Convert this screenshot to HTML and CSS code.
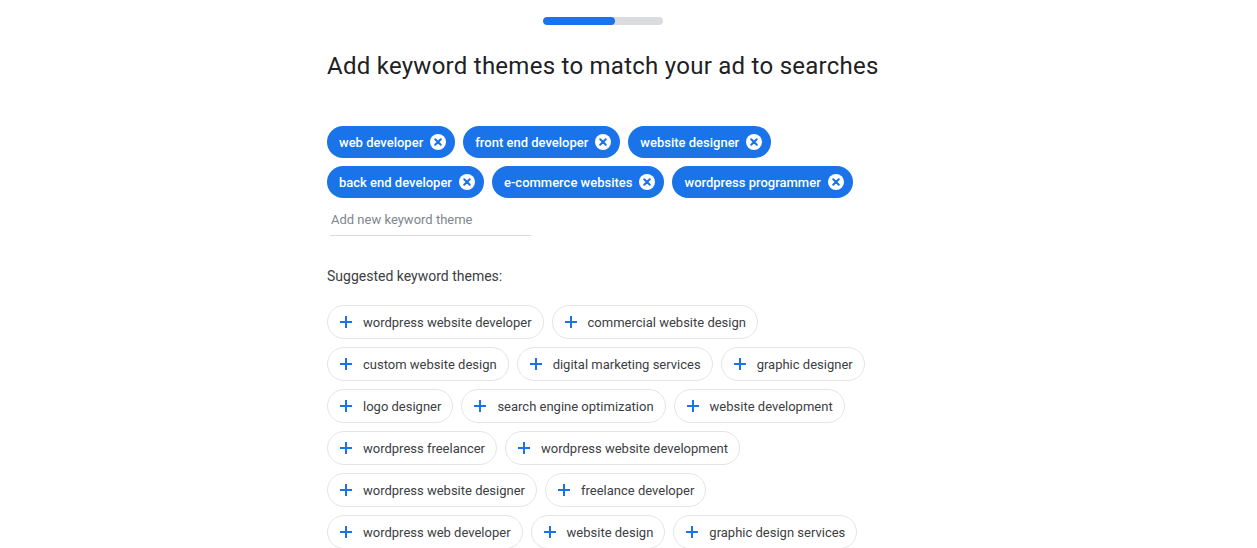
FILE: index.html
```html
<!DOCTYPE html>
<html lang="en">
<head>
  <meta charset="UTF-8">
  <meta name="viewport" content="width=device-width, initial-scale=1.0">
  <title>Keyword themes</title>
  <link rel="stylesheet" href="styles.css">
</head>
<body>
  <div class="page">
    <main class="panel">
      <div class="progress"><div class="progress-fill"></div></div>

      <h1>Add keyword themes to match your ad to searches</h1>

      <!-- Selected keyword themes -->
      <div class="chips selected">
        <div class="chip-row">
          <span class="chip chip-on">web developer<span class="chip-x"><svg viewBox="0 0 16 16"><circle cx="8" cy="8" r="8" fill="#fff"/><path d="M5.2 5.2l5.6 5.6M10.8 5.2l-5.6 5.6" stroke="#1a73e8" stroke-width="2" stroke-linecap="round"/></svg></span></span>
          <span class="chip chip-on">front end developer<span class="chip-x"><svg viewBox="0 0 16 16"><circle cx="8" cy="8" r="8" fill="#fff"/><path d="M5.2 5.2l5.6 5.6M10.8 5.2l-5.6 5.6" stroke="#1a73e8" stroke-width="2" stroke-linecap="round"/></svg></span></span>
          <span class="chip chip-on">website designer<span class="chip-x"><svg viewBox="0 0 16 16"><circle cx="8" cy="8" r="8" fill="#fff"/><path d="M5.2 5.2l5.6 5.6M10.8 5.2l-5.6 5.6" stroke="#1a73e8" stroke-width="2" stroke-linecap="round"/></svg></span></span>
        </div>
        <div class="chip-row">
          <span class="chip chip-on">back end developer<span class="chip-x"><svg viewBox="0 0 16 16"><circle cx="8" cy="8" r="8" fill="#fff"/><path d="M5.2 5.2l5.6 5.6M10.8 5.2l-5.6 5.6" stroke="#1a73e8" stroke-width="2" stroke-linecap="round"/></svg></span></span>
          <span class="chip chip-on">e-commerce websites<span class="chip-x"><svg viewBox="0 0 16 16"><circle cx="8" cy="8" r="8" fill="#fff"/><path d="M5.2 5.2l5.6 5.6M10.8 5.2l-5.6 5.6" stroke="#1a73e8" stroke-width="2" stroke-linecap="round"/></svg></span></span>
          <span class="chip chip-on">wordpress programmer<span class="chip-x"><svg viewBox="0 0 16 16"><circle cx="8" cy="8" r="8" fill="#fff"/><path d="M5.2 5.2l5.6 5.6M10.8 5.2l-5.6 5.6" stroke="#1a73e8" stroke-width="2" stroke-linecap="round"/></svg></span></span>
        </div>
      </div>

      <input class="new-theme" type="text" placeholder="Add new keyword theme">

      <p class="label">Suggested keyword themes:</p>

      <!-- Suggestions -->
      <div class="chips suggested">
        <div class="chip-row">
          <span class="chip chip-add"><svg class="plus" viewBox="0 0 12 12"><path d="M6 0v12M0 6h12" stroke="#1a73e8" stroke-width="2"/></svg>wordpress website developer</span>
          <span class="chip chip-add"><svg class="plus" viewBox="0 0 12 12"><path d="M6 0v12M0 6h12" stroke="#1a73e8" stroke-width="2"/></svg>commercial website design</span>
        </div>
        <div class="chip-row">
          <span class="chip chip-add"><svg class="plus" viewBox="0 0 12 12"><path d="M6 0v12M0 6h12" stroke="#1a73e8" stroke-width="2"/></svg>custom website design</span>
          <span class="chip chip-add"><svg class="plus" viewBox="0 0 12 12"><path d="M6 0v12M0 6h12" stroke="#1a73e8" stroke-width="2"/></svg>digital marketing services</span>
          <span class="chip chip-add"><svg class="plus" viewBox="0 0 12 12"><path d="M6 0v12M0 6h12" stroke="#1a73e8" stroke-width="2"/></svg>graphic designer</span>
        </div>
        <div class="chip-row">
          <span class="chip chip-add"><svg class="plus" viewBox="0 0 12 12"><path d="M6 0v12M0 6h12" stroke="#1a73e8" stroke-width="2"/></svg>logo designer</span>
          <span class="chip chip-add"><svg class="plus" viewBox="0 0 12 12"><path d="M6 0v12M0 6h12" stroke="#1a73e8" stroke-width="2"/></svg>search engine optimization</span>
          <span class="chip chip-add"><svg class="plus" viewBox="0 0 12 12"><path d="M6 0v12M0 6h12" stroke="#1a73e8" stroke-width="2"/></svg>website development</span>
        </div>
        <div class="chip-row">
          <span class="chip chip-add"><svg class="plus" viewBox="0 0 12 12"><path d="M6 0v12M0 6h12" stroke="#1a73e8" stroke-width="2"/></svg>wordpress freelancer</span>
          <span class="chip chip-add"><svg class="plus" viewBox="0 0 12 12"><path d="M6 0v12M0 6h12" stroke="#1a73e8" stroke-width="2"/></svg>wordpress website development</span>
        </div>
        <div class="chip-row">
          <span class="chip chip-add"><svg class="plus" viewBox="0 0 12 12"><path d="M6 0v12M0 6h12" stroke="#1a73e8" stroke-width="2"/></svg>wordpress website designer</span>
          <span class="chip chip-add"><svg class="plus" viewBox="0 0 12 12"><path d="M6 0v12M0 6h12" stroke="#1a73e8" stroke-width="2"/></svg>freelance developer</span>
        </div>
        <div class="chip-row">
          <span class="chip chip-add"><svg class="plus" viewBox="0 0 12 12"><path d="M6 0v12M0 6h12" stroke="#1a73e8" stroke-width="2"/></svg>wordpress web developer</span>
          <span class="chip chip-add"><svg class="plus" viewBox="0 0 12 12"><path d="M6 0v12M0 6h12" stroke="#1a73e8" stroke-width="2"/></svg>website design</span>
          <span class="chip chip-add"><svg class="plus" viewBox="0 0 12 12"><path d="M6 0v12M0 6h12" stroke="#1a73e8" stroke-width="2"/></svg>graphic design services</span>
        </div>
      </div>
    </main>
  </div>
</body>
</html>
```

FILE: styles.css
```css
body {
  margin: 0;
  background: #fff;
  font-family: Roboto, Arial, sans-serif;
  color: #3c4043;
  overflow: hidden;
}

.page {
  display: flex;
  justify-content: center;
  padding-right: 52px;
}

.panel {
  width: 551px;
  display: flex;
  flex-direction: column;
}

/* Progress bar */
.progress {
  align-self: center;
  width: 120px;
  height: 8px;
  margin-top: 17px;
  border-radius: 4px;
  background: #dadce0;
  overflow: hidden;
}

.progress-fill {
  width: 60%;
  height: 100%;
  border-radius: 4px;
  background: #1a73e8;
}

h1 {
  margin: 25px 0 0;
  font-size: 24px;
  font-weight: 400;
  line-height: 32px;
  letter-spacing: 0.26px;
  color: #202124;
  white-space: nowrap;
}

/* Chips */
.chips {
  display: flex;
  flex-direction: column;
  gap: 8px;
}

.chip-row {
  display: flex;
  gap: 8px;
}

.selected {
  margin-top: 44px;
}

.chip {
  display: inline-flex;
  align-items: center;
  box-sizing: border-box;
  border-radius: 17px;
  font-size: 13px;
  white-space: nowrap;
}

.chip-on {
  height: 32px;
  padding: 0 9px 0 12px;
  background: #1a73e8;
  color: #fff;
  font-weight: 500;
}

.chip-x {
  display: inline-flex;
  margin-left: 7px;
}

.chip-x svg {
  width: 16px;
  height: 16px;
}

.new-theme {
  width: 200px;
  margin: 8px 0 0 3px;
  padding: 6px 0 8px 1px;
  border: 0;
  border-bottom: 1px solid #dadce0;
  outline: none;
  font-family: Roboto, Arial, sans-serif;
  font-size: 13px;
  color: #3c4043;
}

.new-theme::placeholder {
  color: #80868b;
}

.label {
  margin: 32px 0 0;
  font-size: 14px;
  line-height: 16px;
}

.suggested {
  margin-top: 21px;
}

.chip-add {
  height: 34px;
  padding: 0 11px 0 12px;
  border: 1px solid #e3e5e8;
  color: #3c4043;
}

.plus {
  width: 12px;
  height: 12px;
  margin-right: 11px;
}
```
